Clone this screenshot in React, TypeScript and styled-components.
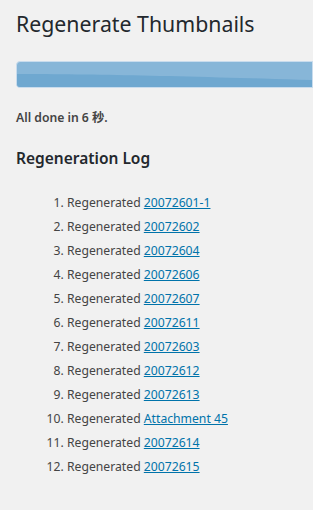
import React from 'react';
import styled, { createGlobalStyle } from 'styled-components';

const GlobalStyle = createGlobalStyle`
  html, body {
    margin: 0;
    padding: 0;
    background: #f1f1f1;
    overflow: hidden;
  }
  body {
    font-family: "Noto Sans", "Noto Sans CJK JP", sans-serif;
    font-size: 12.2px;
    color: #444;
  }
`;

const Wrap = styled.div`
  padding: 9px 0 0 16px;
`;

const Title = styled.h1`
  margin: 0;
  font-size: 21.3px;
  font-weight: 400;
  line-height: 30px;
  color: #23282d;
`;

const Bar = styled.div`
  margin-top: 22px;
  height: 27px;
  border-radius: 4px 0 0 4px;
  border: 1px solid #c9dced;
  box-sizing: border-box;
  background: #87b6d8;
  position: relative;
  overflow: hidden;
`;

const Wave = styled.svg`
  position: absolute;
  left: 0;
  top: 0;
  width: 100%;
  height: 100%;
`;

const Done = styled.p`
  margin: 21px 0 0;
  font-weight: 600;
  line-height: 18px;
`;

const LogTitle = styled.h2`
  margin: 20px 0 0;
  font-size: 15.5px;
  font-weight: 600;
  line-height: 22px;
  color: #23282d;
`;

const Log = styled.ol`
  margin: 25px 0 0 51px;
  padding: 0;
`;

const Item = styled.li`
  line-height: 18px;
  margin-bottom: 6px;
`;

const Link = styled.a`
  color: #0073aa;
  text-decoration: underline;
`;

const items = [
  '20072601-1',
  '20072602',
  '20072604',
  '20072606',
  '20072607',
  '20072611',
  '20072603',
  '20072612',
  '20072613',
  'Attachment 45',
  '20072614',
  '20072615',
];

export default function App() {
  return (
    <>
      <GlobalStyle />
      <Wrap>
        <Title>Regenerate Thumbnails</Title>
        <Bar>
          <Wave viewBox="0 0 300 25" preserveAspectRatio="none">
            <path d="M0 12 C 80 12, 160 14, 300 18 L300 25 L0 25 Z" fill="#6fa8d0" />
          </Wave>
        </Bar>
        <Done>All done in 6 秒.</Done>
        <LogTitle>Regeneration Log</LogTitle>
        <Log>
          {items.map((name) => (
            <Item key={name}>
              Regenerated <Link href="#">{name}</Link>
            </Item>
          ))}
        </Log>
      </Wrap>
    </>
  );
}
